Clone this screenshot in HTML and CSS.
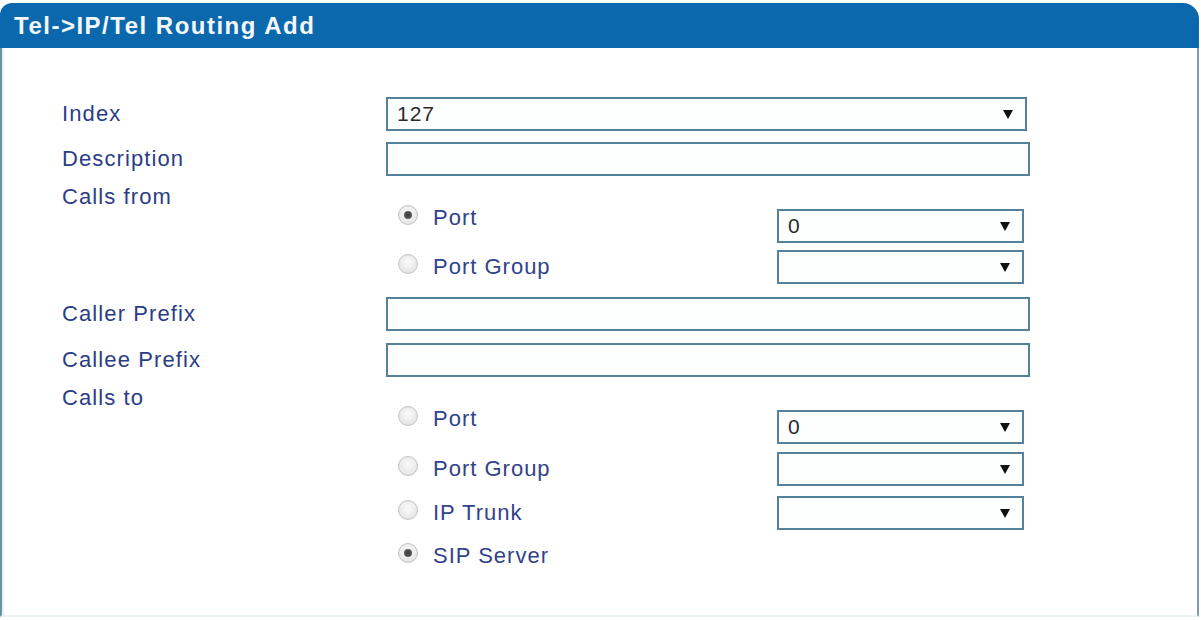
FILE: index.html
```html
<!DOCTYPE html>
<html>
<head>
<meta charset="utf-8">
<link rel="stylesheet" href="styles.css">
</head>
<body>
<div class="panel">
  <div class="panel-head">Tel-&gt;IP/Tel Routing Add</div>
  <div class="panel-body">
    <div class="row">
      <div class="label">Index</div>
      <div class="select wide"><span>127</span><i class="arrow"></i></div>
    </div>
    <div class="row gap11">
      <div class="label">Description</div>
      <div class="input"></div>
    </div>
    <div class="group gap9">
      <div class="label line">Calls from</div>
      <div class="options">
        <div class="opt">
          <div class="choice raised"><span class="radio on"></span>Port</div>
          <div class="select small"><span>0</span><i class="arrow"></i></div>
        </div>
        <div class="opt gap7">
          <div class="choice"><span class="radio"></span>Port Group</div>
          <div class="select small"><span></span><i class="arrow"></i></div>
        </div>
      </div>
    </div>
    <div class="row gap13">
      <div class="label">Caller Prefix</div>
      <div class="input"></div>
    </div>
    <div class="row gap12">
      <div class="label">Callee Prefix</div>
      <div class="input"></div>
    </div>
    <div class="group gap9">
      <div class="label line">Calls to</div>
      <div class="options">
        <div class="opt">
          <div class="choice raised"><span class="radio"></span>Port</div>
          <div class="select small"><span>0</span><i class="arrow"></i></div>
        </div>
        <div class="opt gap8">
          <div class="choice"><span class="radio"></span>Port Group</div>
          <div class="select small"><span></span><i class="arrow"></i></div>
        </div>
        <div class="opt gap10">
          <div class="choice"><span class="radio"></span>IP Trunk</div>
          <div class="select small"><span></span><i class="arrow"></i></div>
        </div>
        <div class="opt gap9">
          <div class="choice"><span class="radio on"></span>SIP Server</div>
        </div>
      </div>
    </div>
  </div>
</div>
</body>
</html>
```

FILE: styles.css
```css
html, body {
  margin: 0;
  padding: 0;
  background: #ffffff;
}
body {
  font-family: "Liberation Sans", Arial, sans-serif;
  width: 1201px;
  height: 620px;
  overflow: hidden;
}
.panel {
  margin-top: 3px;
  width: 1199px;
  height: 614px;
  box-sizing: border-box;
  display: flex;
  flex-direction: column;
}
.panel-head {
  height: 45px;
  background: #0b68ad;
  border-radius: 12px 16px 0 0;
  color: #f4f8fb;
  font-weight: bold;
  font-size: 24px;
  letter-spacing: 1.5px;
  line-height: 46px;
  padding-left: 14px;
  box-sizing: border-box;
}
.panel-body {
  flex: 1;
  border-left: 2px solid #6f8fa3;
  border-right: 2px solid #7f9aab;
  border-bottom: 2px solid #e9f3f3;
  box-shadow: inset 2px 0 0 #e3f3fa;
  padding: 49px 0 0 60px;
  display: flex;
  flex-direction: column;
}
.row {
  display: flex;
  align-items: center;
  height: 34px;
}
.group {
  display: flex;
  flex-direction: column;
}
.gap7 { margin-top: 7px; }
.gap8 { margin-top: 8px; }
.gap9 { margin-top: 9px; }
.gap10 { margin-top: 10px; }
.gap11 { margin-top: 11px; }
.gap12 { margin-top: 12px; }
.gap13 { margin-top: 13px; }
.label {
  width: 324px;
  flex: none;
  color: #2b3d86;
  font-size: 22px;
  letter-spacing: 1.1px;
}
.label.line {
  height: 24px;
  line-height: 24px;
}
.options {
  margin-left: 324px;
  width: 640px;
  display: flex;
  flex-direction: column;
}
.opt {
  display: flex;
  align-items: center;
  height: 34px;
}
.choice {
  width: 391px;
  flex: none;
  display: flex;
  align-items: center;
  color: #31438a;
  font-size: 22px;
  letter-spacing: 1px;
  padding-left: 12px;
  box-sizing: border-box;
  line-height: 22px;
}
.choice.raised {
  align-self: flex-start;
  margin-top: -2px;
}
.radio {
  width: 20px;
  height: 20px;
  border-radius: 50%;
  box-sizing: border-box;
  border: 1px solid #c4c4c4;
  background: radial-gradient(circle at 50% 40%, #fbfbfb 0%, #e6e6e6 70%, #d0d0d0 100%);
  margin-right: 15px;
  margin-top: -6px;
  position: relative;
  flex: none;
}
.radio.on::after {
  content: "";
  position: absolute;
  left: 5px;
  top: 5px;
  width: 8px;
  height: 8px;
  border-radius: 50%;
  background: radial-gradient(circle, #3c3c3c 0%, #5e5e5e 80%, #8a8a8a 100%);
}
.select, .input {
  height: 34px;
  box-sizing: border-box;
  border: 2px solid #55829a;
  background: #fdfffe;
  display: flex;
  align-items: center;
  font-size: 21px;
  letter-spacing: 1px;
  color: #2a2a2a;
}
.select span {
  flex: 1;
  padding-left: 9px;
}
.select.wide { width: 641px; }
.input { width: 644px; }
.select.small { width: 247px; }
.arrow {
  width: 0;
  height: 0;
  border-left: 5px solid transparent;
  border-right: 5px solid transparent;
  border-top: 9px solid #111;
  margin-right: 12px;
}
```
